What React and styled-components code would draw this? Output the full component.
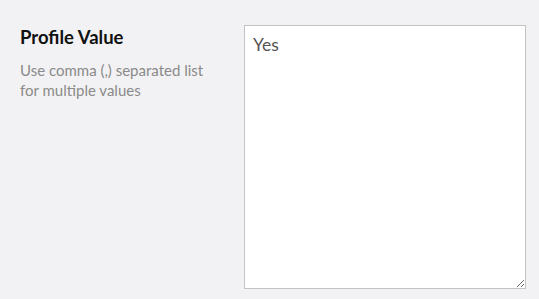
import React from "react";
import styled, { createGlobalStyle } from "styled-components";

const Global = createGlobalStyle`
  html, body { margin: 0; padding: 0; background: #f2f2f4; }
  body { font-family: Lato, "Open Sans", sans-serif; }
`;

const Row = styled.div`
  display: flex;
  align-items: flex-start;
  padding: 25px 0 0 20px;
`;

const Info = styled.div`
  width: 224px;
`;

const Title = styled.div`
  font-size: 18.5px;
  font-weight: 700;
  color: #111;
  line-height: 24px;
  margin-bottom: 11px;
`;

const Hint = styled.div`
  font-size: 15px;
  line-height: 20px;
  color: #8a8a8a;
  width: 196px;
`;

const Area = styled.textarea`
  box-sizing: border-box;
  width: 282px;
  height: 264px;
  margin: 0;
  border: 1px solid #c4c4c4;
  border-radius: 0;
  background: #fff;
  padding: 8px 8px;
  font-family: Lato, "Open Sans", sans-serif;
  font-size: 17.5px;
  line-height: 22px;
  color: #555;
  outline: none;
`;

export default function App() {
  return (
    <>
      <Global />
      <Row>
        <Info>
          <Title>Profile Value</Title>
          <Hint>Use comma (,) separated list for multiple values</Hint>
        </Info>
        <Area defaultValue="Yes" />
      </Row>
    </>
  );
}
